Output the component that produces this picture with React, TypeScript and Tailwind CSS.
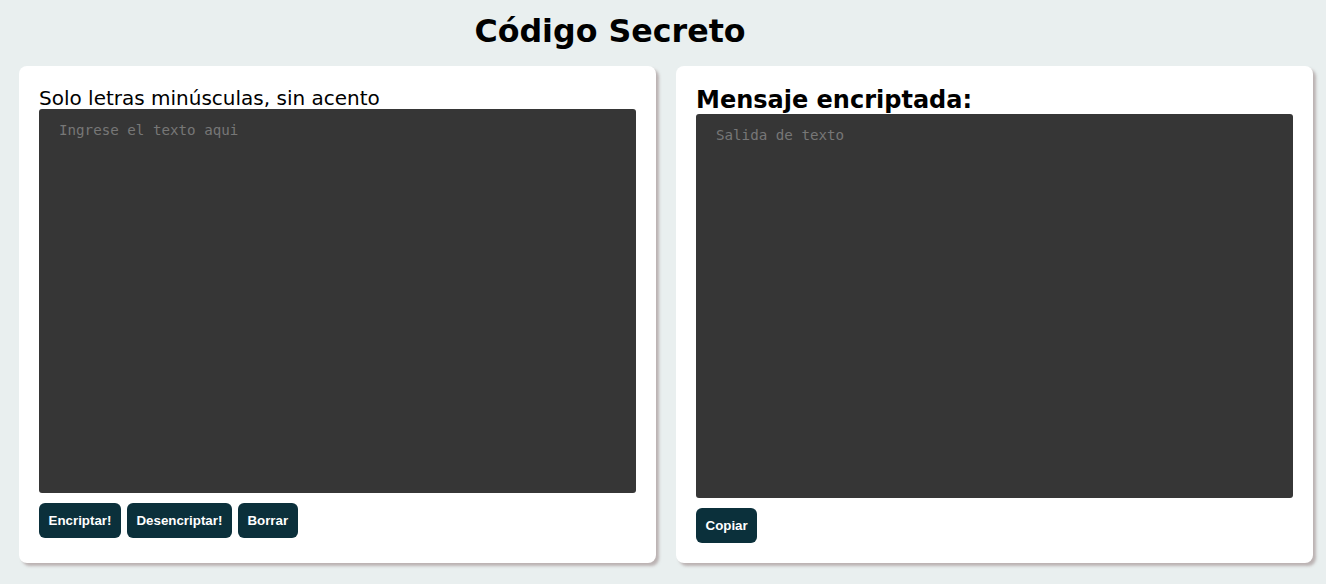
import React, { useState } from 'react'

// Código Secreto: encriptador sencillo de texto
const keys: [string, string][] = [
    ['e', 'enter'],
    ['i', 'imes'],
    ['a', 'ai'],
    ['o', 'ober'],
    ['u', 'ufat'],
]

const encrypt = (text: string) =>
    text.split('').map(ch => keys.find(k => k[0] === ch)?.[1] ?? ch).join('')

const decrypt = (text: string) => {
    let out = text
    keys.forEach(([a, b]) => { out = out.split(b).join(a) })
    return out
}

const btn = 'h-[35px] px-[9.5px] rounded-[6px] bg-[#0b303b] text-white text-[13.333px] font-bold font-["Liberation_Sans",Arial,sans-serif]'
const area = 'block w-full h-[384px] resize-none rounded-[3px] bg-[#363636] text-[#d0d0d0] placeholder:text-[#777777] px-[20px] pt-[12px] text-[14.2px] leading-[18px] font-["DejaVu_Sans_Mono",monospace] outline-none'
const card = 'bg-white rounded-[8px] px-[20px] pt-[20px] pb-[20px] shadow-[3px_3px_3px_rgba(150,130,130,0.55)]'

export default function App() {
    const [input, setInput] = useState('')
    const [output, setOutput] = useState('')

    return (
        <div className="min-h-[584px] bg-[#e9efef] font-['DejaVu_Sans',Verdana,sans-serif]">
            <h1 className="pt-[13px] pr-[106px] text-center text-[31.7px] leading-[37px] font-bold text-black">
                Código Secreto
            </h1>
            <div className="grid grid-cols-[637px_637px] gap-[20px] pl-[19px] mt-[16px]">
                <div className={card}>
                    <label className="block text-[20px] leading-[23px] pt-[1px] -mb-[1px] text-black">Solo letras minúsculas, sin acento</label>
                    <textarea
                        className={area}
                        placeholder="Ingrese el texto aqui"
                        value={input}
                        onChange={e => setInput(e.target.value)}
                    />
                    <div className="flex gap-[6px] mt-[10px]">
                        <button className={btn} onClick={() => setOutput(encrypt(input))}>Encriptar!</button>
                        <button className={btn} onClick={() => setOutput(decrypt(input))}>Desencriptar!</button>
                        <button className={btn} onClick={() => { setInput(''); setOutput('') }}>Borrar</button>
                    </div>
                </div>
                <div className={card}>
                    <h2 className="text-[24px] leading-[28px] font-bold text-black">Mensaje encriptada:</h2>
                    <textarea className={area} placeholder="Salida de texto" value={output} readOnly />
                    <div className="flex mt-[10px]">
                        <button className={btn} onClick={() => navigator.clipboard?.writeText(output)}>Copiar</button>
                    </div>
                </div>
            </div>
        </div>
    )
}
